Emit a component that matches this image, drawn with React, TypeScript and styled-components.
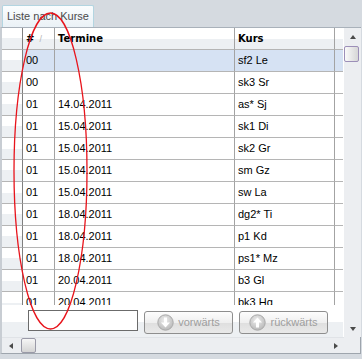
import React from 'react';
import styled, { createGlobalStyle } from 'styled-components';

type Entry = { nr: string; termin: string; kurs: string; selected?: boolean };

const entries: Entry[] = [
  { nr: '00', termin: '', kurs: 'sf2 Le', selected: true },
  { nr: '00', termin: '', kurs: 'sk3 Sr' },
  { nr: '01', termin: '14.04.2011', kurs: 'as* Sj' },
  { nr: '01', termin: '15.04.2011', kurs: 'sk1 Di' },
  { nr: '01', termin: '15.04.2011', kurs: 'sk2 Gr' },
  { nr: '01', termin: '15.04.2011', kurs: 'sm Gz' },
  { nr: '01', termin: '15.04.2011', kurs: 'sw La' },
  { nr: '01', termin: '18.04.2011', kurs: 'dg2* Ti' },
  { nr: '01', termin: '18.04.2011', kurs: 'p1 Kd' },
  { nr: '01', termin: '18.04.2011', kurs: 'ps1* Mz' },
  { nr: '01', termin: '20.04.2011', kurs: 'b3 Gl' },
  { nr: '01', termin: '20.04.2011', kurs: 'bk3 Hg' },
];

const GlobalStyle = createGlobalStyle`
  html, body {
    margin: 0;
    padding: 0;
    background: #d5dae0;
  }
  body {
    font-family: "Liberation Sans", Arial, sans-serif;
    font-size: 11px;
    color: #000;
  }
`;

const Screen = styled.div`
  position: relative;
  width: 362px;
  height: 359px;
  overflow: hidden;
  background: #d5dae0;
`;

const TabStrip = styled.div`
  height: 27px;
  display: flex;
  align-items: flex-end;
  padding-left: 2px;
  box-sizing: border-box;
`;

const Tab = styled.div`
  width: 92px;
  height: 22px;
  box-sizing: border-box;
  border: 1px solid #b3d5e1;
  border-bottom: none;
  border-radius: 2px 2px 0 0;
  background: linear-gradient(#fbfdfe, #eaf1f6);
  color: #4a4a4a;
  padding-left: 4px;
  line-height: 21px;
  white-space: nowrap;
`;

const Panel = styled.div`
  width: 361px;
  height: 327px;
  box-sizing: border-box;
  border-left: 2px solid #c8cdd3;
  border-right: 1px solid #9ea5ad;
  border-top: 1px solid #a9b1ba;
  border-bottom: 1px solid #9ea5ad;
  background: #fff;
  display: flex;
  flex-direction: column;
`;

const Body = styled.div`
  display: flex;
  height: 309px;
`;

const Main = styled.div`
  width: 341px;
  display: flex;
  flex-direction: column;
`;

const Viewport = styled.div`
  height: 277px;
  overflow: hidden;
`;

const Row = styled.div<{ $selected?: boolean }>`
  display: grid;
  grid-template-columns: 21px 32px 180px 100px 8px;
  height: 22px;
  background: ${p => (p.$selected ? '#d6e2f3' : '#fff')};
`;

const HeaderRow = styled(Row)`
  font-family: "DejaVu Sans", Verdana, sans-serif;
  font-weight: bold;
  font-size: 10px;
  background: linear-gradient(#fff 0 50%, #edf0f3 50% 100%);
`;

const Cell = styled.div<{ $last?: boolean }>`
  box-sizing: border-box;
  border-bottom: 1px solid #b5b5b5;
  border-right: ${p => (p.$last ? 'none' : '1px solid #a3a3a3')};
  padding-left: 3px;
  line-height: 21px;
  white-space: nowrap;
  overflow: hidden;
`;

const RowHead = styled(Cell)`
  border-right: 1px solid #7f7f7f;
  background: linear-gradient(#fff 0 50%, #edf0f3 50% 100%);
`;

const SortMark = styled.span`
  margin-left: 5px;
  font-family: "Liberation Sans", Arial, sans-serif;
  font-weight: normal;
  font-size: 9px;
  color: #b5b5b5;
`;

const BottomBar = styled.div`
  height: 32px;
  display: flex;
  align-items: flex-start;
  gap: 6px;
  padding-left: 26px;
  box-sizing: border-box;
  background: linear-gradient(#fff 0 52%, #edf0f3 52% 100%);
`;

const SearchBox = styled.div`
  width: 110px;
  height: 21px;
  margin-top: 5px;
  box-sizing: border-box;
  border: 1px solid #6b6b6b;
  background: #fff;
`;

const NavButton = styled.div`
  width: 89px;
  height: 23px;
  margin-top: 6px;
  box-sizing: border-box;
  border: 1px solid #8e8e8e;
  border-radius: 3px;
  background: linear-gradient(#fdfdfd, #efefef 50%, #dedede 50%, #e9e9e9);
  color: #9e9e9e;
  display: flex;
  align-items: center;
  justify-content: center;
  gap: 4px;
  line-height: 21px;
`;

const VScroll = styled.div`
  width: 17px;
  margin-left: 1px;
  background: #eceef1;
  display: flex;
  flex-direction: column;
  align-items: center;
`;

const ArrowBox = styled.div`
  width: 17px;
  height: 17px;
  display: flex;
  align-items: center;
  justify-content: center;
`;

const Arrow = styled.div<{ $dir: 'up' | 'down' | 'left' | 'right' }>`
  width: 0;
  height: 0;
  ${p =>
    p.$dir === 'up'
      ? 'border-left: 3.5px solid transparent; border-right: 3.5px solid transparent; border-bottom: 4px solid #4a4a4a;'
      : p.$dir === 'down'
      ? 'border-left: 3.5px solid transparent; border-right: 3.5px solid transparent; border-top: 4px solid #4a4a4a;'
      : p.$dir === 'left'
      ? 'border-top: 3.5px solid transparent; border-bottom: 3.5px solid transparent; border-right: 4px solid #4a4a4a;'
      : 'border-top: 3.5px solid transparent; border-bottom: 3.5px solid transparent; border-left: 4px solid #4a4a4a;'}
`;

const Thumb = styled.div<{ $horizontal?: boolean }>`
  box-sizing: border-box;
  width: 15px;
  height: 16px;
  border: 1px solid ${p => (p.$horizontal ? '#9a9aa8' : '#9c8fb8')};
  border-radius: 2px;
  background: linear-gradient(${p => (p.$horizontal ? '#f6f6f6, #d4d4d4' : '90deg, #fafafa, #d6d6d6')});
  margin-top: 1px;
  align-self: flex-start;
`;

const Spacer = styled.div`
  flex: 1;
`;

const HRow = styled.div`
  display: flex;
  height: 16px;
`;

const HScroll = styled.div`
  width: 342px;
  display: flex;
  align-items: stretch;
  background: #eceef1;
  border-top: 1px solid #e0e3e7;
  box-sizing: border-box;
`;

const HArrowBox = styled(ArrowBox)`
  height: 15px;
`;

const HThumb = styled(Thumb)`
  margin: 0 0 0 2px;
  height: 15px;
`;

const Corner = styled.div`
  flex: 1;
  background: #eceef1;
`;

const Overlay = styled.svg`
  position: absolute;
  left: 0;
  top: 0;
  pointer-events: none;
`;

const ArrowIcon: React.FC<{ up?: boolean }> = ({ up }) => (
  <svg width="17" height="17" viewBox="0 0 17 17">
    <defs>
      <radialGradient id={up ? 'gu' : 'gd'} cx="45%" cy="35%" r="65%">
        <stop offset="0%" stopColor="#eeeeee" />
        <stop offset="100%" stopColor="#b9b9b9" />
      </radialGradient>
    </defs>
    <circle cx="8.5" cy="8.5" r="7.7" fill={`url(#${up ? 'gu' : 'gd'})`} stroke="#a9a9a9" strokeWidth="1" />
    <g transform={up ? 'rotate(180 8.5 8.5)' : undefined}>
      <rect x="7" y="3.5" width="3" height="6" fill="#fff" />
      <path d="M4 8.5 L13 8.5 L8.5 13.5 Z" fill="#fff" />
    </g>
  </svg>
);

const App: React.FC = () => {
  return (
    <Screen>
      <GlobalStyle />
      <TabStrip>
        <Tab>Liste nach Kurse</Tab>
      </TabStrip>
      <Panel>
        <Body>
          <Main>
            <Viewport>
              <HeaderRow>
                <RowHead />
                <Cell>
                  #<SortMark>/</SortMark>
                </Cell>
                <Cell>Termine</Cell>
                <Cell>Kurs</Cell>
                <Cell $last />
              </HeaderRow>
              {entries.map((e, i) => (
                <Row key={i} $selected={e.selected}>
                  <RowHead />
                  <Cell>{e.nr}</Cell>
                  <Cell>{e.termin}</Cell>
                  <Cell>{e.kurs}</Cell>
                  <Cell $last />
                </Row>
              ))}
            </Viewport>
            <BottomBar>
              <SearchBox />
              <NavButton>
                <ArrowIcon />
                vorwärts
              </NavButton>
              <NavButton>
                <ArrowIcon up />
                rückwärts
              </NavButton>
            </BottomBar>
          </Main>
          <VScroll>
            <ArrowBox>
              <Arrow $dir="up" />
            </ArrowBox>
            <Thumb />
            <Spacer />
            <ArrowBox>
              <Arrow $dir="down" />
            </ArrowBox>
          </VScroll>
        </Body>
        <HRow>
          <HScroll>
            <HArrowBox>
              <Arrow $dir="left" />
            </HArrowBox>
            <HThumb $horizontal />
            <Spacer />
            <HArrowBox>
              <Arrow $dir="right" />
            </HArrowBox>
          </HScroll>
          <Corner />
        </HRow>
      </Panel>
      <Overlay width="362" height="359" viewBox="0 0 362 359">
        <ellipse cx="50.5" cy="171" rx="36.5" ry="158" fill="none" stroke="#e8141c" strokeWidth="1.3" />
      </Overlay>
    </Screen>
  );
};

export default App;
